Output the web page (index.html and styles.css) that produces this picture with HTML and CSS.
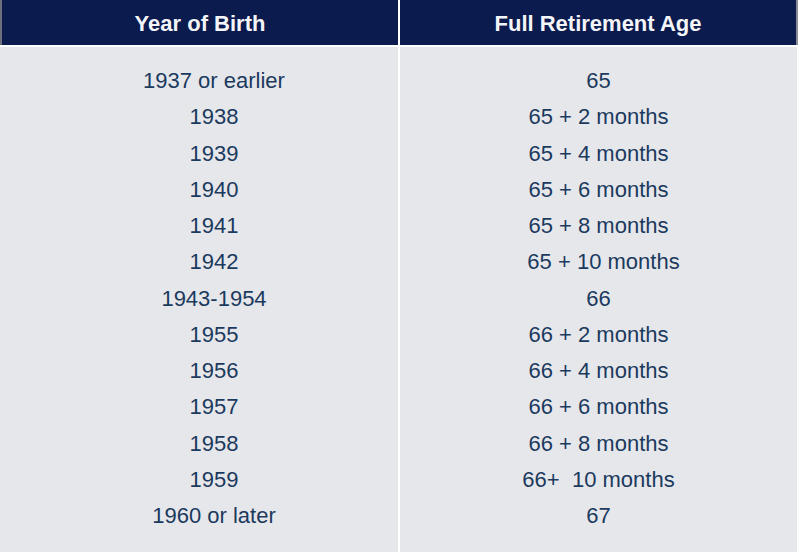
FILE: index.html
```html
<!DOCTYPE html>
<html>
<head>
<meta charset="utf-8">
<link rel="stylesheet" href="styles.css">
</head>
<body>
<div class="table">
  <div class="head head-left">Year of Birth</div>
  <div class="head head-right">Full Retirement Age</div>
  <div class="col col-left">
    <div class="cell">1937 or earlier</div>
    <div class="cell">1938</div>
    <div class="cell">1939</div>
    <div class="cell">1940</div>
    <div class="cell">1941</div>
    <div class="cell">1942</div>
    <div class="cell">1943-1954</div>
    <div class="cell">1955</div>
    <div class="cell">1956</div>
    <div class="cell">1957</div>
    <div class="cell">1958</div>
    <div class="cell">1959</div>
    <div class="cell">1960 or later</div>
  </div>
  <div class="col col-right">
    <div class="cell">65</div>
    <div class="cell">65 + 2 months</div>
    <div class="cell">65 + 4 months</div>
    <div class="cell">65 + 6 months</div>
    <div class="cell">65 + 8 months</div>
    <div class="cell cell-shift">65 + 10 months</div>
    <div class="cell">66</div>
    <div class="cell">66 + 2 months</div>
    <div class="cell">66 + 4 months</div>
    <div class="cell">66 + 6 months</div>
    <div class="cell">66 + 8 months</div>
    <div class="cell">66+&nbsp; 10 months</div>
    <div class="cell">67</div>
  </div>
</div>
</body>
</html>
```

FILE: styles.css
```css
html, body {
  margin: 0;
  padding: 0;
  background: #ffffff;
}

body {
  font-family: "Liberation Sans", Arial, sans-serif;
  width: 800px;
  height: 554px;
  overflow: hidden;
}

.table {
  display: grid;
  grid-template-columns: 398px 398px;
  grid-template-rows: 45px 505px;
  column-gap: 2px;
  row-gap: 2px;
  width: 798px;
  background: #ffffff;
}

.head {
  background: #0b1b4e;
  color: #f4f5f8;
  font-weight: bold;
  font-size: 22px;
  line-height: 42px;
  padding-top: 3px;
  text-align: center;
  box-sizing: border-box;
}

.head-left {
  border-left: 2px solid #6d717c;
}

.head-right {
  border-right: 2px solid #8a8d95;
}

.col {
  background: #e6e7eb;
  padding-top: 16px;
  padding-bottom: 18px;
  box-sizing: border-box;
  color: #1b3a5e;
  font-size: 22px;
  line-height: 36.25px;
  text-align: center;
}

.col-left {
  padding-left: 30px;
}

.col-right {
  margin-right: 1px;
  padding-left: 0;
}

.cell {
  white-space: nowrap;
}

.cell-shift {
  padding-left: 10px;
}
```
